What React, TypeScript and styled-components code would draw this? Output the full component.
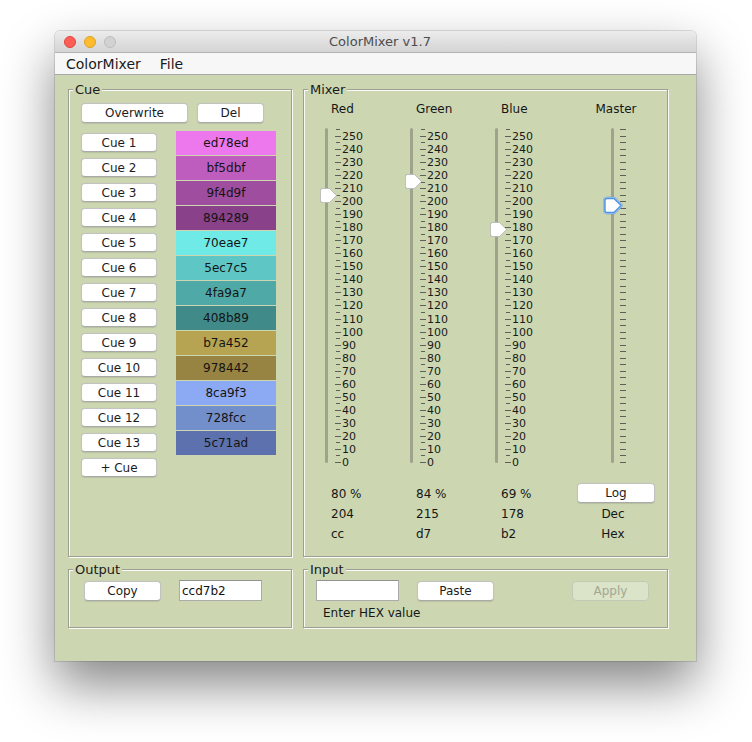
import React from "react";
import styled, { createGlobalStyle } from "styled-components";

const BG = "#ccd7b2";
const FONT = `"DejaVu Sans", "Liberation Sans", sans-serif`;

const GlobalStyle = createGlobalStyle`
  html, body { margin: 0; padding: 0; background: #ffffff; overflow: hidden; }
  body { font-family: ${FONT}; color: #161616; }
  * { box-sizing: border-box; }
`;

const Page = styled.div`
  height: 742px;
  padding: 31px 0 0 55px;
`;

const Window = styled.div`
  width: 641px;
  border-radius: 5px 5px 0 0;
  overflow: hidden;
  box-shadow: 0 24px 52px rgba(0, 0, 0, 0.48), 0 0 0 1px rgba(0, 0, 0, 0.12);
`;

const TitleBar = styled.div`
  height: 22px;
  border-bottom: 1px solid #b3b3b3;
  background: linear-gradient(#ececec, #d4d4d4);
  display: grid;
  grid-template-columns: 1fr auto 1fr;
  align-items: center;
  padding-left: 9px;
`;

const Lights = styled.div`
  display: flex;
  gap: 8px;
`;

const Light = styled.span<{ $c: string; $b: string }>`
  width: 12px;
  height: 12px;
  border-radius: 50%;
  background: ${(p) => p.$c};
  border: 0.5px solid ${(p) => p.$b};
`;

const Title = styled.div`
  font-size: 13px;
  color: #4c4c4c;
`;

const MenuBar = styled.div`
  height: 22px;
  border-bottom: 1px solid #a9a9a9;
  background: #f7f7f7;
  display: flex;
  align-items: center;
  gap: 19px;
  padding-left: 11px;
  font-size: 14px;
  color: #1a1a1a;
`;

const Content = styled.div`
  background: ${BG};
  height: 586px;
  padding: 14px 28px 33px 13px;
  display: grid;
  grid-template-columns: 224px 365px;
  grid-template-rows: 468px 59px;
  gap: 12px 11px;
`;

const Panel = styled.section`
  position: relative;
  border: 1px solid #9c9f94;
  box-shadow: inset 1px 1px 0 #fafbf6, 1px 1px 0 #fafbf6;
`;

const Legend = styled.span`
  position: absolute;
  top: -9px;
  left: 4px;
  padding: 0 2px;
  background: ${BG};
  font-size: 13px;
  line-height: 17px;
  color: #1a1a1a;
`;

const Button = styled.button<{ $w: number; $h?: number }>`
  width: ${(p) => p.$w}px;
  height: ${(p) => p.$h ?? 20}px;
  padding: 0;
  font-family: ${FONT};
  font-size: 12px;
  color: #1c1c1c;
  background: #ffffff;
  border: 1px solid #c2c2c2;
  border-bottom-color: #a9a9a9;
  border-radius: 4px;
  box-shadow: 0 0.5px 1px rgba(0, 0, 0, 0.1);
  &:disabled {
    background: rgba(255, 255, 255, 0.3);
    color: #a2a791;
    border-color: #c4c9b6;
    box-shadow: none;
  }
`;

/* ---------- Cue panel ---------- */

const CueBody = styled.div`
  padding: 13px 0 0 12px;
`;

const ButtonRow = styled.div`
  display: flex;
  gap: 9px;
`;

const CueGrid = styled.div`
  margin-top: 8px;
  display: grid;
  grid-template-columns: 76px 100px;
  column-gap: 19px;
  grid-auto-rows: 25px;
`;

const CueButton = styled(Button)`
  align-self: start;
  margin-top: 2px;
`;

const Swatch = styled.div<{ $c: string }>`
  height: 24px;
  background: ${(p) => p.$c};
  display: flex;
  align-items: center;
  justify-content: center;
  font-size: 12px;
  color: #141414;
`;

/* ---------- Mixer ---------- */

const MixerGrid = styled.div`
  padding: 12px 0 0 16px;
  display: grid;
  grid-template-columns: 85px 85px 85px 82px;
  grid-template-rows: 15px auto 20px 20px 20px;
  align-items: center;
`;

const ColLabel = styled.div<{ $center?: boolean }>`
  font-size: 12px;
  line-height: 15px;
  padding-left: ${(p) => (p.$center ? 0 : 11)}px;
  text-align: ${(p) => (p.$center ? "center" : "left")};
`;

const ValueCell = styled.div<{ $center?: boolean }>`
  font-size: 12px;
  height: 20px;
  line-height: 20px;
  padding-top: 1px;
  padding-left: ${(p) => (p.$center ? 0 : 11)}px;
  padding-right: ${(p) => (p.$center ? 6 : 0)}px;
  text-align: ${(p) => (p.$center ? "center" : "left")};
`;

const LogButton = styled(Button)`
  justify-self: center;
`;

const SliderBox = styled.div`
  position: relative;
  height: 340px;
  margin: 9px 0 17px;
`;

const Track = styled.div<{ $left: number }>`
  position: absolute;
  left: ${(p) => p.$left}px;
  top: 2px;
  bottom: 3px;
  width: 3px;
  border-radius: 2px;
  background: #9ea48b;
`;

const Tick = styled.div<{ $left: number; $w: number }>`
  position: absolute;
  left: ${(p) => p.$left}px;
  width: ${(p) => p.$w}px;
  height: 1px;
  background: #5d5f58;
`;

const TickLabel = styled.span`
  position: absolute;
  left: 22px;
  font-size: 11px;
  line-height: 12px;
  color: #1a1a1a;
`;

const ThumbSvg = styled.svg<{ $left: number }>`
  position: absolute;
  left: ${(p) => p.$left}px;
  filter: drop-shadow(0 0.5px 0.6px rgba(0, 0, 0, 0.35));
`;

/* ---------- Output / Input ---------- */

const OutputBody = styled.div`
  padding: 10px 0 0 15px;
  display: flex;
  align-items: center;
  gap: 18px;
`;

const InputBody = styled.div`
  padding: 10px 18px 0 12px;
`;

const InputRow = styled.div`
  display: flex;
  align-items: center;
  gap: 18px;
`;

const ApplyButton = styled(Button)`
  margin-left: auto;
`;

const Field = styled.input`
  width: 83px;
  height: 21px;
  padding: 0 0 0 2px;
  border: 1px solid #ababab;
  border-top-color: #929292;
  background: #ffffff;
  font-family: ${FONT};
  font-size: 12px;
  color: #111;
  outline: none;
`;

const Hint = styled.div`
  margin-top: 5px;
  padding-left: 7px;
  font-size: 12px;
  line-height: 15px;
`;

const swatches = [
  "ed78ed", "bf5dbf", "9f4d9f", "894289", "70eae7", "5ec7c5", "4fa9a7",
  "408b89", "b7a452", "978442", "8ca9f3", "728fcc", "5c71ad",
];

const PX = 1.3043;
const yOf = (v: number) => 336 - v * PX;
const tickValues = Array.from({ length: 52 }, (_, i) => i * 5);

const Thumb: React.FC<{ v: number; left: number; focused?: boolean }> = ({ v, left, focused }) => {
  const body = "M2.5 0.5 H9.5 L16.5 7.5 L9.5 14.5 H2.5 A2 2 0 0 1 0.5 12.5 V2.5 A2 2 0 0 1 2.5 0.5 Z";
  if (focused) {
    return (
      <ThumbSvg $left={left} width={22} height={19} viewBox="0 0 22 19" style={{ top: yOf(v) - 9.5 }}>
        <g transform="translate(2.5 2)">
          <path d={body} fill="none" stroke="#9cc2ef" strokeWidth={3.6} strokeLinejoin="round" />
          <path d={body} fill="#ffffff" stroke="#4d93e4" strokeWidth={1.4} strokeLinejoin="round" />
        </g>
      </ThumbSvg>
    );
  }
  return (
    <ThumbSvg $left={left} width={18} height={15} viewBox="0 0 18 15" style={{ top: yOf(v) - 7.5 }}>
      <path d={body} fill="#ffffff" stroke="#bcbcbc" strokeWidth={0.8} />
    </ThumbSvg>
  );
};

const ColorSlider: React.FC<{ value: number }> = ({ value }) => (
  <SliderBox>
    <Track $left={5} />
    {tickValues.map((v) => {
      const major = v % 10 === 0;
      const y = Math.round(yOf(v));
      return (
        <React.Fragment key={v}>
          <Tick $left={major ? 15 : 16} $w={major ? 6 : 4} style={{ top: y }} />
          {major && <TickLabel style={{ top: y - 5 }}>{v}</TickLabel>}
        </React.Fragment>
      );
    })}
    <Thumb v={value} left={0} />
  </SliderBox>
);

const MasterSlider: React.FC<{ value: number }> = ({ value }) => (
  <SliderBox>
    <Track $left={36} />
    {tickValues.map((v) => (
      <Tick key={v} $left={45} $w={6} style={{ top: Math.round(yOf(v)) }} />
    ))}
    <Thumb v={value} left={27} focused />
  </SliderBox>
);

export default function App() {
  const rgb = [204, 215, 178];
  const hex = rgb.map((n) => n.toString(16).padStart(2, "0"));
  const pct = rgb.map((n) => Math.floor((n / 255) * 100));

  return (
    <Page>
      <GlobalStyle />
      <Window>
        <TitleBar>
          <Lights>
            <Light $c="#fd5f57" $b="#e0443e" />
            <Light $c="#febc2e" $b="#dea123" />
            <Light $c="#d2d2d2" $b="#bdbdbd" />
          </Lights>
          <Title>ColorMixer v1.7</Title>
          <span />
        </TitleBar>
        <MenuBar>
          <span>ColorMixer</span>
          <span>File</span>
        </MenuBar>
        <Content>
          <Panel>
            <Legend>Cue</Legend>
            <CueBody>
              <ButtonRow>
                <Button $w={107}>Overwrite</Button>
                <Button $w={67}>Del</Button>
              </ButtonRow>
              <CueGrid>
                {swatches.map((c, i) => (
                  <React.Fragment key={c}>
                    <CueButton $w={76} $h={19}>Cue {i + 1}</CueButton>
                    <Swatch $c={`#${c}`}>{c}</Swatch>
                  </React.Fragment>
                ))}
                <CueButton $w={76} $h={19}>+ Cue</CueButton>
              </CueGrid>
            </CueBody>
          </Panel>

          <Panel>
            <Legend>Mixer</Legend>
            <MixerGrid>
              <ColLabel>Red</ColLabel>
              <ColLabel>Green</ColLabel>
              <ColLabel>Blue</ColLabel>
              <ColLabel $center>Master</ColLabel>

              <ColorSlider value={rgb[0]} />
              <ColorSlider value={rgb[1]} />
              <ColorSlider value={rgb[2]} />
              <MasterSlider value={197} />

              {pct.map((p, i) => (
                <ValueCell key={`p${i}`}>{p} %</ValueCell>
              ))}
              <LogButton $w={78} $h={20}>Log</LogButton>

              {rgb.map((n, i) => (
                <ValueCell key={`d${i}`}>{n}</ValueCell>
              ))}
              <ValueCell $center>Dec</ValueCell>

              {hex.map((h, i) => (
                <ValueCell key={`h${i}`}>{h}</ValueCell>
              ))}
              <ValueCell $center>Hex</ValueCell>
            </MixerGrid>
          </Panel>

          <Panel>
            <Legend>Output</Legend>
            <OutputBody>
              <Button $w={77} $h={20}>Copy</Button>
              <Field readOnly value={hex.join("")} />
            </OutputBody>
          </Panel>

          <Panel>
            <Legend>Input</Legend>
            <InputBody>
              <InputRow>
                <Field readOnly value="" />
                <Button $w={77} $h={20}>Paste</Button>
                <ApplyButton $w={77} $h={20} disabled>Apply</ApplyButton>
              </InputRow>
              <Hint>Enter HEX value</Hint>
            </InputBody>
          </Panel>
        </Content>
      </Window>
    </Page>
  );
}
